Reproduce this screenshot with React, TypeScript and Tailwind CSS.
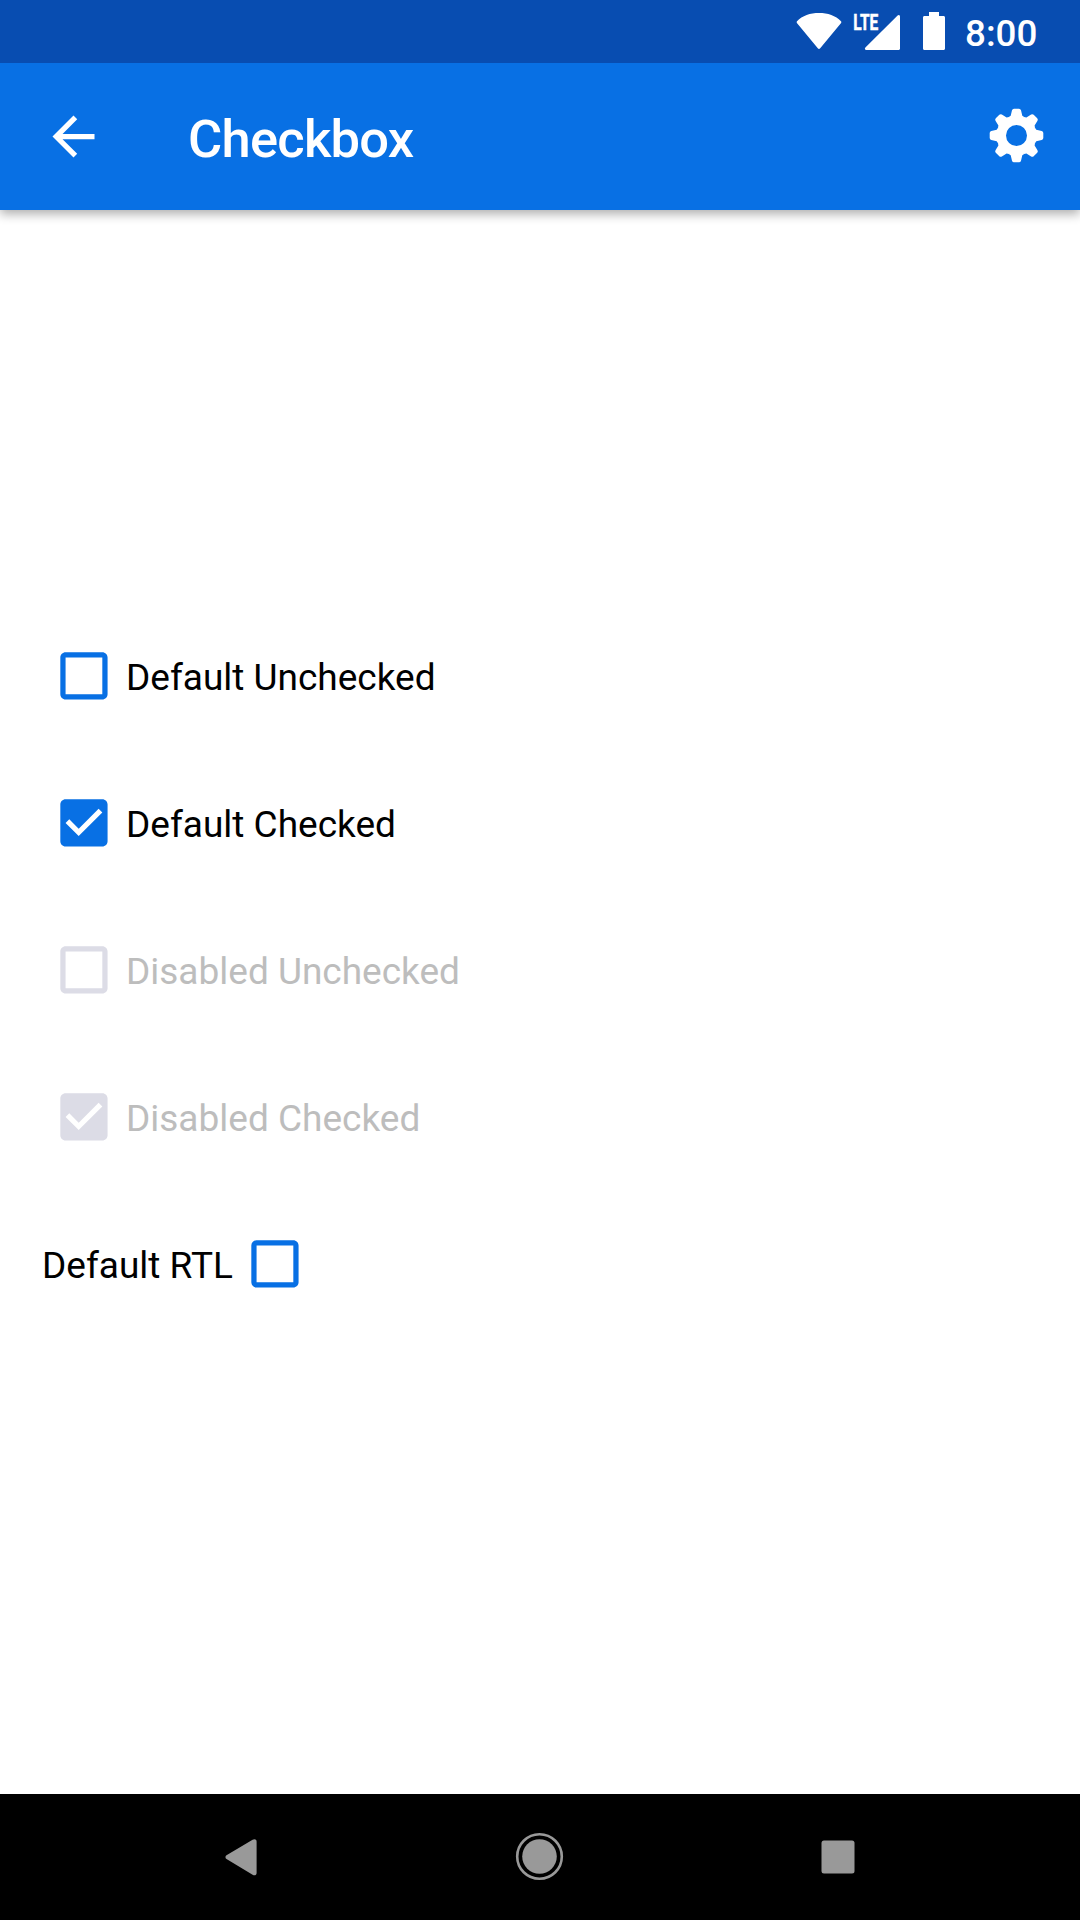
import React from "react";

const BOX_CHECKED =
  "M19 3H5c-1.11 0-2 .9-2 2v14c0 1.1.89 2 2 2h14c1.11 0 2-.9 2-2V5c0-1.1-.89-2-2-2zm-9 14l-5-5 1.41-1.41L10 14.17l7.59-7.59L19 8l-9 9z";
const BOX_EMPTY =
  "M19 5v14H5V5h14m0-2H5c-1.1 0-2 .9-2 2v14c0 1.1.9 2 2 2h14c1.1 0 2-.9 2-2V5c0-1.1-.9-2-2-2z";

type OptionProps = {
  label: string;
  checked?: boolean;
  disabled?: boolean;
  reversed?: boolean;
};

function Option({ label, checked = false, disabled = false, reversed = false }: OptionProps) {
  return (
    <div
      role="checkbox"
      aria-checked={checked}
      aria-disabled={disabled}
      className={`flex h-[147px] items-center justify-end self-start ${reversed ? "" : "flex-row-reverse"}`}
    >
      <span
        className={`pt-[2px] whitespace-nowrap text-[37px] leading-none ${disabled ? "text-[#bdbdbd]" : "text-black"}`}
      >
        {label}
      </span>
      <span className="flex size-[84px] shrink-0 items-center justify-center pr-px pb-px">
        <svg
          viewBox="-0.17 -0.17 24 24"
          className={`size-[63px] ${disabled ? "fill-[#dcdce6]" : "fill-[#0870e4]"}`}
        >
          <path d={checked ? BOX_CHECKED : BOX_EMPTY} />
        </svg>
      </span>
    </div>
  );
}

function StatusBar() {
  return (
    <div className="relative z-10 flex h-[63px] shrink-0 bg-[#084db1] text-white">
      <svg viewBox="0 0 160 63" className="ml-[790px] h-[63px] w-[160px] shrink-0 fill-white">
        <path d="M7 21.2C12.3 15.6 20.2 13 29 13s16.700 2.600 22 8.200c.5.600.5 1.100.1 1.700L30.200 48.300c-.7.900-1.700.9-2.400 0L6.900 22.900c-.4-.6-.4-1.100.1-1.700z" />
        <path d="M110 16.500V48.500c0 .9-.6 1.500-1.500 1.500H76.300c-1.400 0-1.900-1.400-.9-2.400L107.600 15.400c1-1 2.400-.5 2.400 1.100z" />
        <path d="M139 12h10v4h4.500c.9 0 1.500.6 1.500 1.500v31c0 .9-.6 1.500-1.500 1.500h-19c-.9 0-1.500-.6-1.500-1.500v-31c0-.9.600-1.500 1.500-1.500h4.500z" />
        <text
          x="63.300"
          y="30"
          textLength="25"
          lengthAdjust="spacingAndGlyphs"
          strokeWidth="0.5"
          className="stroke-white font-['Roboto'] text-[22px] font-bold"
        >
          LTE
        </text>
      </svg>
      <span className="ml-[15px] text-[36.75px] leading-[67px] font-medium">8:00</span>
    </div>
  );
}

const TEETH = [0, 45, 90, 135, 180, 225, 270, 315];

function Gear() {
  return (
    <svg viewBox="-31.500 -31.500 63 63" className="size-[63px] fill-white">
      <circle r="15" className="fill-none stroke-white" strokeWidth="9" />
      {TEETH.map((angle) => (
        <path
          key={angle}
          transform={`rotate(${angle})`}
          d="M-7.700 -18.500L-5.800 -19.800L-4.500 -25.200Q-4 -26.800 -2.500 -26.800H2.500Q4 -26.800 4.500 -25.200L5.800 -19.800L7.700 -18.500L5 -14H-5z"
        />
      ))}
    </svg>
  );
}

function AppBar() {
  return (
    <header className="relative flex h-[147px] shrink-0 items-center bg-[#0870e4] text-white shadow-[0_4px_10px_rgba(0,0,0,0.32)]">
      <svg viewBox="0 0 24 24" className="ml-[42px] size-[63px] fill-white">
        <path d="M20 11H7.830l5.590-5.590L12 4l-8 8 8 8 1.410-1.410L7.830 13H20v-2z" />
      </svg>
      <h1 className="ml-[83px] grow pt-[5px] text-[52.5px] leading-none font-medium tracking-[-0.75px]">
        Checkbox
      </h1>
      <div className="mr-[32px] pb-[1.5px]">
        <Gear />
      </div>
    </header>
  );
}

function NavigationBar() {
  return (
    <nav className="flex h-[126px] shrink-0 bg-black">
      <svg viewBox="0 0 1080 126" className="h-[126px] w-[1080px] fill-[#999999]">
        <path d="M226.500 61.300L252.600 45.700c2-1.200 4-.3 4 1.800V79c0 2.100-2 3-4 1.800L226.500 65.100c-1.400-.9-1.400-2.900 0-3.800z" />
        <circle cx="539.500" cy="62.500" r="17.300" />
        <circle cx="539.500" cy="62.500" r="22.300" className="fill-none stroke-[#999999]" strokeWidth="2.600" />
        <rect x="821.500" y="46.500" width="33" height="33" rx="2.500" />
      </svg>
    </nav>
  );
}

export default function App() {
  return (
    <div className="flex h-[1920px] w-[1080px] flex-col overflow-hidden bg-white font-['Roboto',sans-serif]">
      <StatusBar />
      <AppBar />
      <main className="flex grow flex-col pt-[392.5px] pl-[42px]">
        <Option label="Default Unchecked" />
        <Option label="Default Checked" checked />
        <Option label="Disabled Unchecked" disabled />
        <Option label="Disabled Checked" checked disabled />
        <Option label="Default RTL" reversed />
      </main>
      <NavigationBar />
    </div>
  );
}
